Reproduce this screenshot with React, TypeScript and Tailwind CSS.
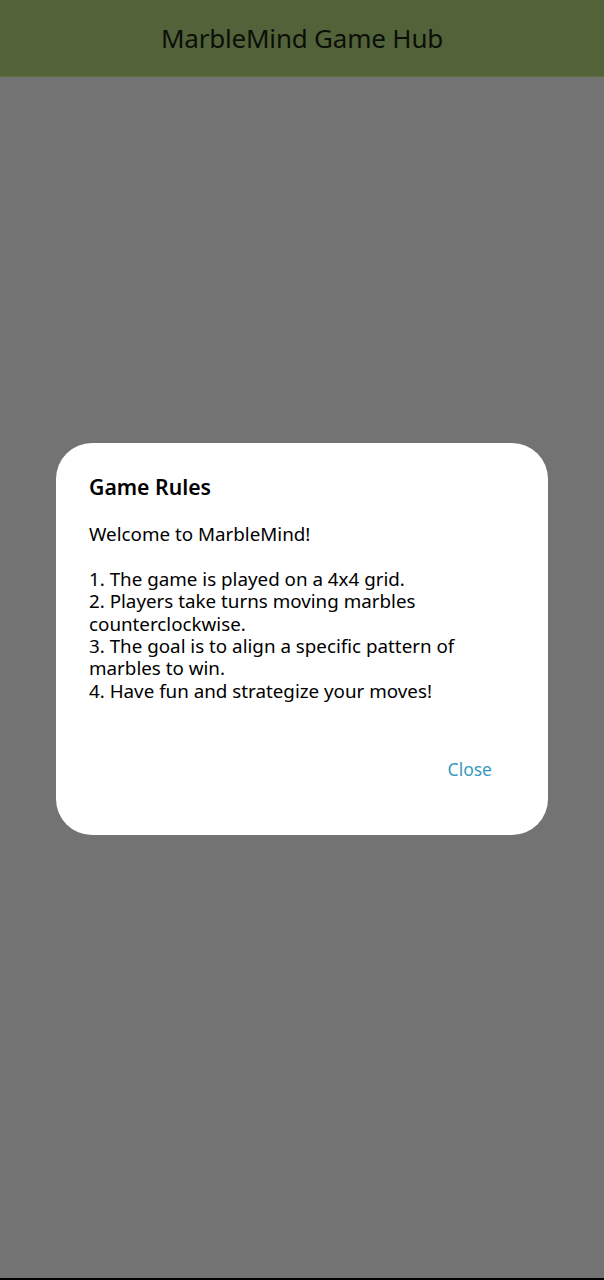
import React from "react";

export default function App() {
  return (
    <div
      className="relative w-[604px] h-[1280px] bg-[#737373] overflow-hidden"
      style={{ fontFamily: '"Noto Sans", Inter, sans-serif' }}
    >
      <header className="h-[77px] bg-[#52633a] flex items-center justify-center border-b border-[#5b6f41]">
        <h1 className="text-[26px] text-[#0c0f08] tracking-[-0.2px]">MarbleMind Game Hub</h1>
      </header>
      <div className="flex justify-center pt-[366px]">
        <div className="w-[492px] h-[392px] bg-white rounded-[36px] pl-[33px] pr-[33px] pt-[30px] flex flex-col">
          <h2 className="text-[21.2px] font-semibold text-black leading-[28px]">Game Rules</h2>
          <p className="mt-[22px] text-[18.8px] leading-[22.4px] text-black whitespace-pre-line">
            {"Welcome to MarbleMind!\n\n1. The game is played on a 4x4 grid.\n2. Players take turns moving marbles counterclockwise.\n3. The goal is to align a specific pattern of marbles to win.\n4. Have fun and strategize your moves!"}
          </p>
          <div className="flex justify-end mt-[54px] pr-[23px]">
            <button className="text-[17.5px] text-[#3a9ac0]">Close</button>
          </div>
        </div>
      </div>
      <div className="absolute bottom-0 left-0 w-full h-[2px] bg-black" />
    </div>
  );
}
